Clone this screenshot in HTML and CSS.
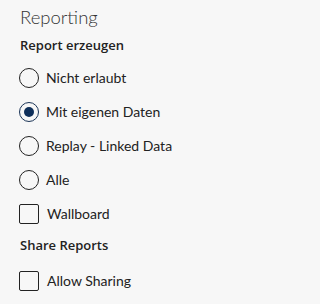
FILE: index.html
```html
<!DOCTYPE html>
<html>
<head>
<meta charset="utf-8">
<link rel="stylesheet" href="styles.css">
</head>
<body>
<div class="panel">
  <h1 class="title">Reporting</h1>
  <h2 class="section">Report erzeugen</h2>
  <div class="options">
    <label class="row"><span class="radio"></span><span class="label">Nicht erlaubt</span></label>
    <label class="row"><span class="radio checked"></span><span class="label">Mit eigenen Daten</span></label>
    <label class="row"><span class="radio"></span><span class="label">Replay - Linked Data</span></label>
    <label class="row"><span class="radio"></span><span class="label">Alle</span></label>
    <label class="row"><span class="check"></span><span class="label cb">Wallboard</span></label>
  </div>
  <h2 class="section share">Share Reports</h2>
  <div class="options second">
    <label class="row"><span class="check"></span><span class="label cb">Allow Sharing</span></label>
  </div>
</div>
</body>
</html>
```
FILE: styles.css
```css
html, body {
  margin: 0;
  padding: 0;
  background: #f7f7f7;
}
body {
  font-family: "Lato", "Open Sans", sans-serif;
  color: #222;
}
.panel {
  padding: 5px 0 0 20px;
  display: flex;
  flex-direction: column;
}
.title {
  margin: 0;
  font-family: "Lato", "Open Sans", sans-serif;
  font-size: 18.5px;
  font-weight: 300;
  line-height: 25px;
  color: #333;
}
.section {
  margin: 6px 0 0 0;
  font-family: "Open Sans", sans-serif;
  font-size: 13px;
  font-weight: 600;
  line-height: 18px;
  color: #222;
}
.share {
  margin-top: 5px;
}
.options {
  display: flex;
  flex-direction: column;
  padding-top: 7px;
}
.options.second {
  padding-top: 10px;
}
.row {
  display: flex;
  align-items: center;
  height: 34px;
  margin-left: -1px;
}
.radio {
  box-sizing: border-box;
  width: 20px;
  height: 20px;
  border: 1.5px solid #222;
  border-radius: 50%;
  display: flex;
  align-items: center;
  justify-content: center;
  flex: none;
}
.radio.checked {
  border-color: #1c3557;
}
.radio.checked::after {
  content: "";
  width: 10px;
  height: 10px;
  border-radius: 50%;
  background: #0e2f5a;
}
.check {
  box-sizing: border-box;
  width: 20px;
  height: 20px;
  border: 1.5px solid #222;
  border-radius: 2px;
  flex: none;
}
.label {
  margin-left: 7px;
  font-size: 14px;
  line-height: 18px;
  color: #222;
}
.label.cb {
  margin-left: 8px;
}
```
